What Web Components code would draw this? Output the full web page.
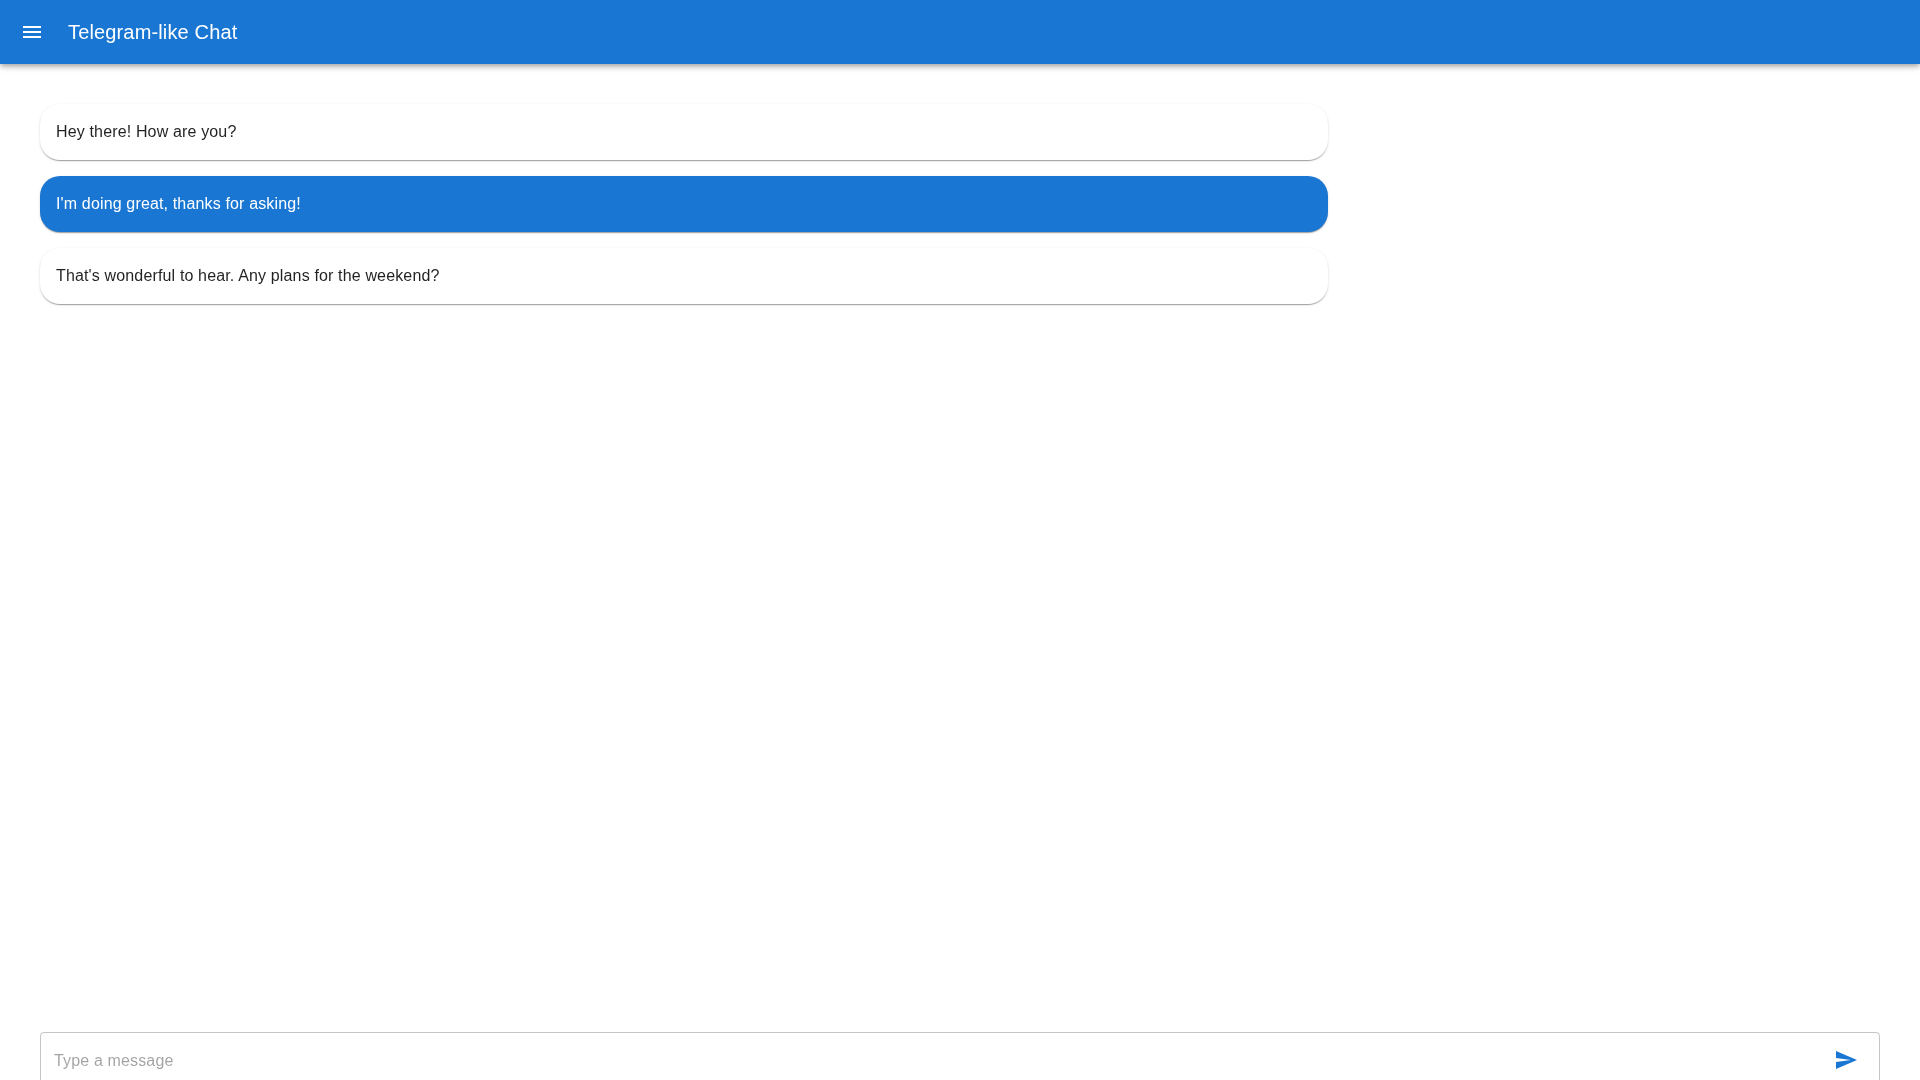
<!DOCTYPE html>
<html lang="en">
<head>
<meta charset="utf-8">
<title>Telegram-like Chat</title>
<style>
  html, body { margin: 0; height: 100%; overflow: hidden; background: #fff; }
  body { font-family: "Liberation Sans", Arial, sans-serif; }
</style>
</head>
<body>
<chat-app>
  <app-bar slot="header">Telegram-like Chat</app-bar>
  <chat-message>Hey there! How are you?</chat-message>
  <chat-message own>I'm doing great, thanks for asking!</chat-message>
  <chat-message>That's wonderful to hear. Any plans for the weekend?</chat-message>
  <message-input slot="footer"></message-input>
</chat-app>

<script>
  // The outer frame: header, message list, input at the bottom
  customElements.define('chat-app', class extends HTMLElement {
    constructor() {
      super();
      this.attachShadow({ mode: 'open' }).innerHTML = `
        <style>
          /* own layer, so text is drawn with greyscale antialiasing */
          :host { display: flex; flex-direction: column; height: calc(100vh + 8px); will-change: transform; }
          #list {
            flex: 1;
            display: flex;
            flex-direction: column;
            gap: 16px;
            padding: 40px 40px 0;
          }
          #footer { padding: 0 40px; }
        </style>
        <slot name="header"></slot>
        <div id="list"><slot></slot></div>
        <div id="footer"><slot name="footer"></slot></div>
      `;
    }
  });

  customElements.define('app-bar', class extends HTMLElement {
    constructor() {
      super();
      this.attachShadow({ mode: 'open' }).innerHTML = `
        <style>
          :host {
            display: flex;
            align-items: center;
            height: 64px;
            padding: 0 24px 0 20px;
            background: #1976d2;
            color: #fff;
            position: relative;
            z-index: 1;
            box-shadow: 0 2px 4px -1px rgba(0,0,0,.2), 0 4px 5px 0 rgba(0,0,0,.14), 0 1px 10px 0 rgba(0,0,0,.12);
          }
          svg { width: 24px; height: 24px; fill: currentColor; margin-right: 24px; }
          h1 { margin: 0; font-size: 20px; font-weight: 400; line-height: 32px; letter-spacing: .15px; }
        </style>
        <svg viewBox="0 0 24 24"><path d="M3 18h18v-2H3v2zm0-5h18v-2H3v2zm0-7v2h18V6H3z"/></svg>
        <h1><slot></slot></h1>
      `;
    }
  });

  customElements.define('chat-message', class extends HTMLElement {
    constructor() {
      super();
      this.attachShadow({ mode: 'open' }).innerHTML = `
        <style>
          :host {
            display: block;
            box-sizing: border-box;
            width: 70%;
            padding: 16px;
            border-radius: 20px;
            background: #fff;
            color: rgba(0,0,0,.87);
            font-size: 16px;
            line-height: 24px;
            letter-spacing: .15px;
            box-shadow: 0 2px 1px -1px rgba(0,0,0,.2), 0 1px 1px 0 rgba(0,0,0,.14), 0 1px 3px 0 rgba(0,0,0,.12);
          }
          :host([own]) { background: #1976d2; color: #fff; }
        </style>
        <slot></slot>
      `;
    }
  });

  customElements.define('message-input', class extends HTMLElement {
    constructor() {
      super();
      this.attachShadow({ mode: 'open' }).innerHTML = `
        <style>
          :host {
            display: flex;
            align-items: center;
            box-sizing: border-box;
            height: 56px;
            padding: 2px 13px 0 13px;
            border: 1px solid rgba(0,0,0,.23);
            border-radius: 4px;
          }
          input {
            flex: 1;
            border: 0;
            outline: 0;
            padding: 0;
            font: 16px/24px "Liberation Sans", Arial, sans-serif;
            letter-spacing: .15px;
            color: rgba(0,0,0,.87);
            background: transparent;
          }
          input::placeholder { color: rgba(0,0,0,.365); opacity: 1; }
          svg { width: 24px; height: 24px; fill: #1976d2; margin: -2px 8px 0 0; }
        </style>
        <input type="text" placeholder="Type a message">
        <svg viewBox="0 0 24 24"><path d="M2.01 21 23 12 2.01 3 2 10l15 2-15 2z"/></svg>
      `;
    }
  });
</script>
</body>
</html>
